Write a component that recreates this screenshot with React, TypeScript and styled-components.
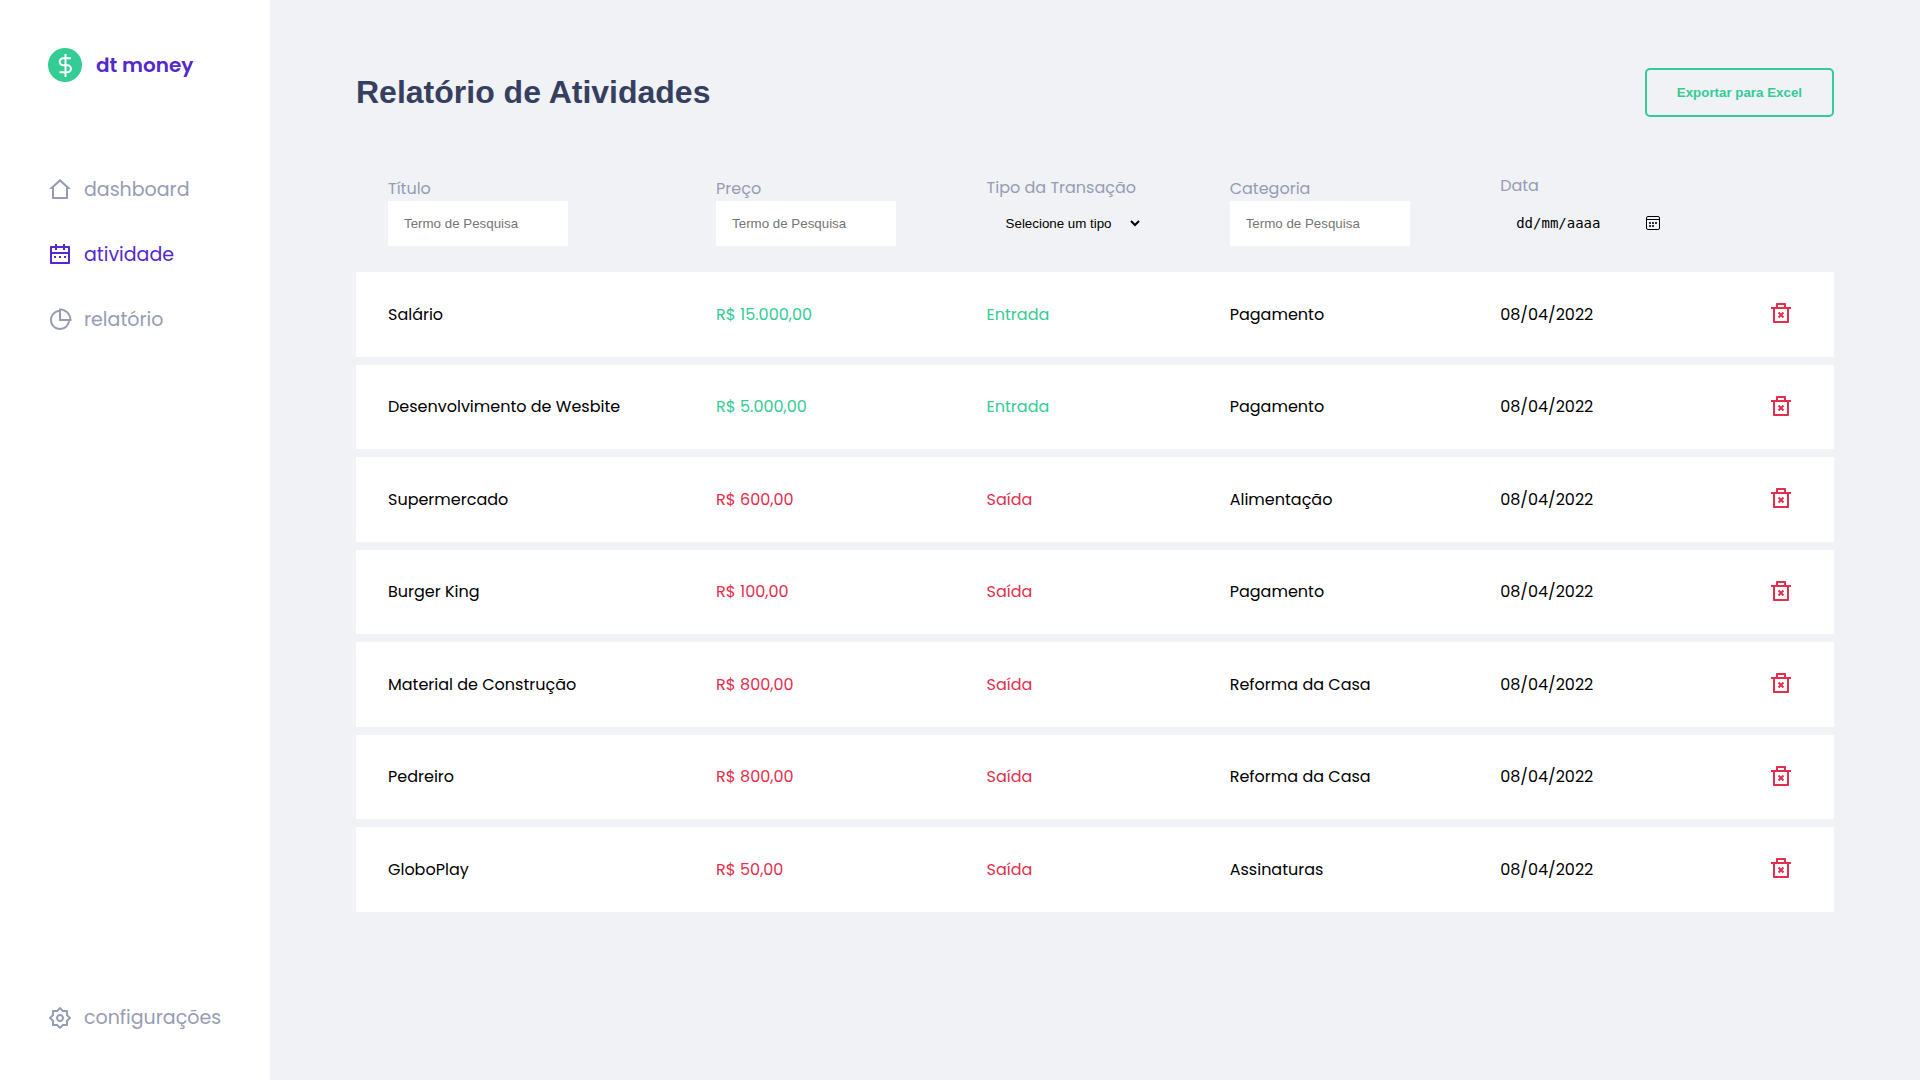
import React, { useState } from "react";
import styled, { createGlobalStyle } from "styled-components";
import {
  RiCalendar2Line,
  RiDeleteBin2Line,
  RiHome2Line,
  RiPieChart2Line,
  RiSettings2Line,
} from "react-icons/ri";

const colors = {
  background: "#f0f2f5",
  surface: "#ffffff",
  title: "#363f5f",
  muted: "#969cb3",
  primary: "#5429cc",
  income: "#33cc95",
  outcome: "#e52e4d",
};

const GlobalStyle = createGlobalStyle`
  * {
    margin: 0;
    padding: 0;
    box-sizing: border-box;
  }

  body {
    background: ${colors.background};
    font-family: Poppins, Inter, sans-serif;
    font-size: 16px;
    color: #000;
    -webkit-font-smoothing: antialiased;
  }

  button, input, select {
    font-family: "Liberation Sans", Arial, sans-serif;
  }
`;

const Layout = styled.div`
  display: grid;
  grid-template-columns: 270px 1fr;
  min-height: 100vh;
`;

const Sidebar = styled.aside`
  display: flex;
  flex-direction: column;
  padding: 48px 48px 47px;
  background: ${colors.surface};
`;

const Logo = styled.a`
  display: flex;
  align-items: center;
  gap: 14px;
  margin-bottom: 93px;
  color: ${colors.primary};
  font-size: 20px;
  font-weight: 600;
  line-height: 34px;
  white-space: nowrap;
  text-decoration: none;
`;

const Nav = styled.nav`
  display: flex;
  flex: 1;
  flex-direction: column;
  gap: 35px;
`;

const NavLink = styled.a<{ $active?: boolean; $bottom?: boolean }>`
  display: flex;
  align-items: center;
  gap: 12px;
  margin-top: ${({ $bottom }) => ($bottom ? "auto" : "0")};
  color: ${({ $active }) => ($active ? colors.primary : colors.muted)};
  font-size: 19px;
  line-height: 30px;
  text-decoration: none;

  svg {
    flex: none;
    font-size: 24px;
  }
`;

const Main = styled.main`
  padding: 68px 86px;
`;

const Header = styled.header`
  display: flex;
  align-items: center;
  justify-content: space-between;
  margin-bottom: 49px;
`;

const Title = styled.h1`
  color: ${colors.title};
  font-family: "Liberation Sans", Arial, sans-serif;
  font-size: 32px;
  font-weight: 700;
`;

const ExportButton = styled.button`
  padding: 15px 30px;
  border: 2px solid ${colors.income};
  border-radius: 5px;
  background: transparent;
  color: ${colors.income};
  font-weight: 700;
  cursor: pointer;
`;

const Table = styled.table`
  width: 100%;
  table-layout: fixed;
  border-spacing: 0 8px;
`;

const Column = styled.col<{ $share: number }>`
  width: ${({ $share }) => $share}%;
`;

const HeadCell = styled.th`
  height: 83px;
  padding: 0 32px 18px;
  font-weight: 400;
  text-align: left;
  vertical-align: bottom;
`;

const FilterLabel = styled.label`
  display: block;
  color: ${colors.muted};
  font-size: 16px;
  line-height: 24px;
`;

const FilterInput = styled.input`
  display: block;
  width: 180px;
  padding: 15px 16px;
  border: 0;
  background: ${colors.surface};
`;

const FilterSelect = styled.select`
  display: block;
  height: 46px;
  padding: 0 15px;
  border: 0;
  background: transparent;
`;

const DateField = styled.div`
  display: flex;
  align-items: center;
  justify-content: space-between;
  width: 180px;
  height: 48px;
  padding: 2px 20px 0 16px;
`;

const DateInput = styled.input`
  width: 100px;
  border: 0;
  background: transparent;
  color: #000;
  font-family: monospace;
  font-size: 14px;

  &::placeholder {
    color: #000;
  }
`;

const IconButton = styled.button`
  display: flex;
  border: 0;
  background: transparent;
  color: #000;
  cursor: pointer;
`;

const Row = styled.tr`
  height: 85px;

  &:nth-child(even) {
    height: 84px;
  }
`;

const Cell = styled.td<{ $color?: string }>`
  padding: 0 32px;
  background: ${colors.surface};
  color: ${({ $color }) => $color ?? "#000"};
  line-height: 24px;
  white-space: nowrap;
`;

const DeleteButton = styled(IconButton)`
  padding-bottom: 3px;
  color: ${colors.outcome};
  font-size: 24px;
`;

type Transaction = {
  title: string;
  price: string;
  type: "Entrada" | "Saída";
  category: string;
  date: string;
};

const initialTransactions: Transaction[] = [
  { title: "Salário", price: "R$ 15.000,00", type: "Entrada", category: "Pagamento", date: "08/04/2022" },
  { title: "Desenvolvimento de Wesbite", price: "R$ 5.000,00", type: "Entrada", category: "Pagamento", date: "08/04/2022" },
  { title: "Supermercado", price: "R$ 600,00", type: "Saída", category: "Alimentação", date: "08/04/2022" },
  { title: "Burger King", price: "R$ 100,00", type: "Saída", category: "Pagamento", date: "08/04/2022" },
  { title: "Material de Construção", price: "R$ 800,00", type: "Saída", category: "Reforma da Casa", date: "08/04/2022" },
  { title: "Pedreiro", price: "R$ 800,00", type: "Saída", category: "Reforma da Casa", date: "08/04/2022" },
  { title: "GloboPlay", price: "R$ 50,00", type: "Saída", category: "Assinaturas", date: "08/04/2022" },
];

function LogoMark() {
  return (
    <svg width="34" height="34" viewBox="0 0 34 34" fill="none" aria-hidden="true">
      <circle cx="17" cy="17" r="17" fill={colors.income} />
      <path
        d="M17.5 6v23M23 10.3h-7.8a3.5 3.5 0 0 0 0 7h4.2a3.5 3.5 0 0 1 0 7H11.5"
        stroke="#fff"
        strokeWidth="2"
      />
    </svg>
  );
}

function CalendarIcon() {
  return (
    <svg width="14" height="14" viewBox="0 0 14 14" fill="none" aria-hidden="true">
      <rect x="0.5" y="0.5" width="13" height="13" rx="1.5" stroke="currentColor" />
      <path d="M1 3.5h12" stroke="currentColor" />
      <path
        d="M3 6h2v2H3zM6 6h2v2H6zM9 6h2v2H9zM3 9h2v2H3zM6 9h2v2H6z"
        fill="currentColor"
        fillOpacity="0.8"
      />
    </svg>
  );
}

export default function App() {
  const [transactions, setTransactions] = useState(initialTransactions);

  const remove = (item: Transaction) =>
    setTransactions((list) => list.filter((other) => other !== item));

  return (
    <Layout lang="pt-BR">
      <GlobalStyle />
      <Sidebar>
        <Logo href="#">
          <LogoMark />
          dt money
        </Logo>
        <Nav>
          <NavLink href="#dashboard"><RiHome2Line />dashboard</NavLink>
          <NavLink href="#atividade" $active><RiCalendar2Line />atividade</NavLink>
          <NavLink href="#relatorio"><RiPieChart2Line />relatório</NavLink>
          <NavLink href="#configuracoes" $bottom><RiSettings2Line />configurações</NavLink>
        </Nav>
      </Sidebar>
      <Main>
        <Header>
          <Title>Relatório de Atividades</Title>
          <ExportButton type="button">Exportar para Excel</ExportButton>
        </Header>
        <Table>
          <colgroup>
            <Column $share={22.2} />
            <Column $share={18.3} />
            <Column $share={16.45} />
            <Column $share={18.3} />
            <Column $share={18.2} />
            <Column $share={6.55} />
          </colgroup>
          <thead>
            <tr>
              <HeadCell>
                <FilterLabel htmlFor="title">Título</FilterLabel>
                <FilterInput id="title" placeholder="Termo de Pesquisa" />
              </HeadCell>
              <HeadCell>
                <FilterLabel htmlFor="price">Preço</FilterLabel>
                <FilterInput id="price" placeholder="Termo de Pesquisa" />
              </HeadCell>
              <HeadCell>
                <FilterLabel htmlFor="type">Tipo da Transação</FilterLabel>
                <FilterSelect id="type">
                  <option>Selecione um tipo</option>
                  <option>Entrada</option>
                  <option>Saída</option>
                </FilterSelect>
              </HeadCell>
              <HeadCell>
                <FilterLabel htmlFor="category">Categoria</FilterLabel>
                <FilterInput id="category" placeholder="Termo de Pesquisa" />
              </HeadCell>
              <HeadCell>
                <FilterLabel htmlFor="date">Data</FilterLabel>
                <DateField>
                  <DateInput id="date" inputMode="numeric" placeholder="dd/mm/aaaa" />
                  <IconButton type="button" aria-label="Abrir calendário">
                    <CalendarIcon />
                  </IconButton>
                </DateField>
              </HeadCell>
              <HeadCell />
            </tr>
          </thead>
          <tbody>
            {transactions.map((item) => {
              const tone = item.type === "Entrada" ? colors.income : colors.outcome;
              return (
                <Row key={item.title}>
                  <Cell>{item.title}</Cell>
                  <Cell $color={tone}>{item.price}</Cell>
                  <Cell $color={tone}>{item.type}</Cell>
                  <Cell>{item.category}</Cell>
                  <Cell>{item.date}</Cell>
                  <Cell>
                    <DeleteButton type="button" aria-label={`Excluir ${item.title}`} onClick={() => remove(item)}>
                      <RiDeleteBin2Line />
                    </DeleteButton>
                  </Cell>
                </Row>
              );
            })}
          </tbody>
        </Table>
      </Main>
    </Layout>
  );
}
